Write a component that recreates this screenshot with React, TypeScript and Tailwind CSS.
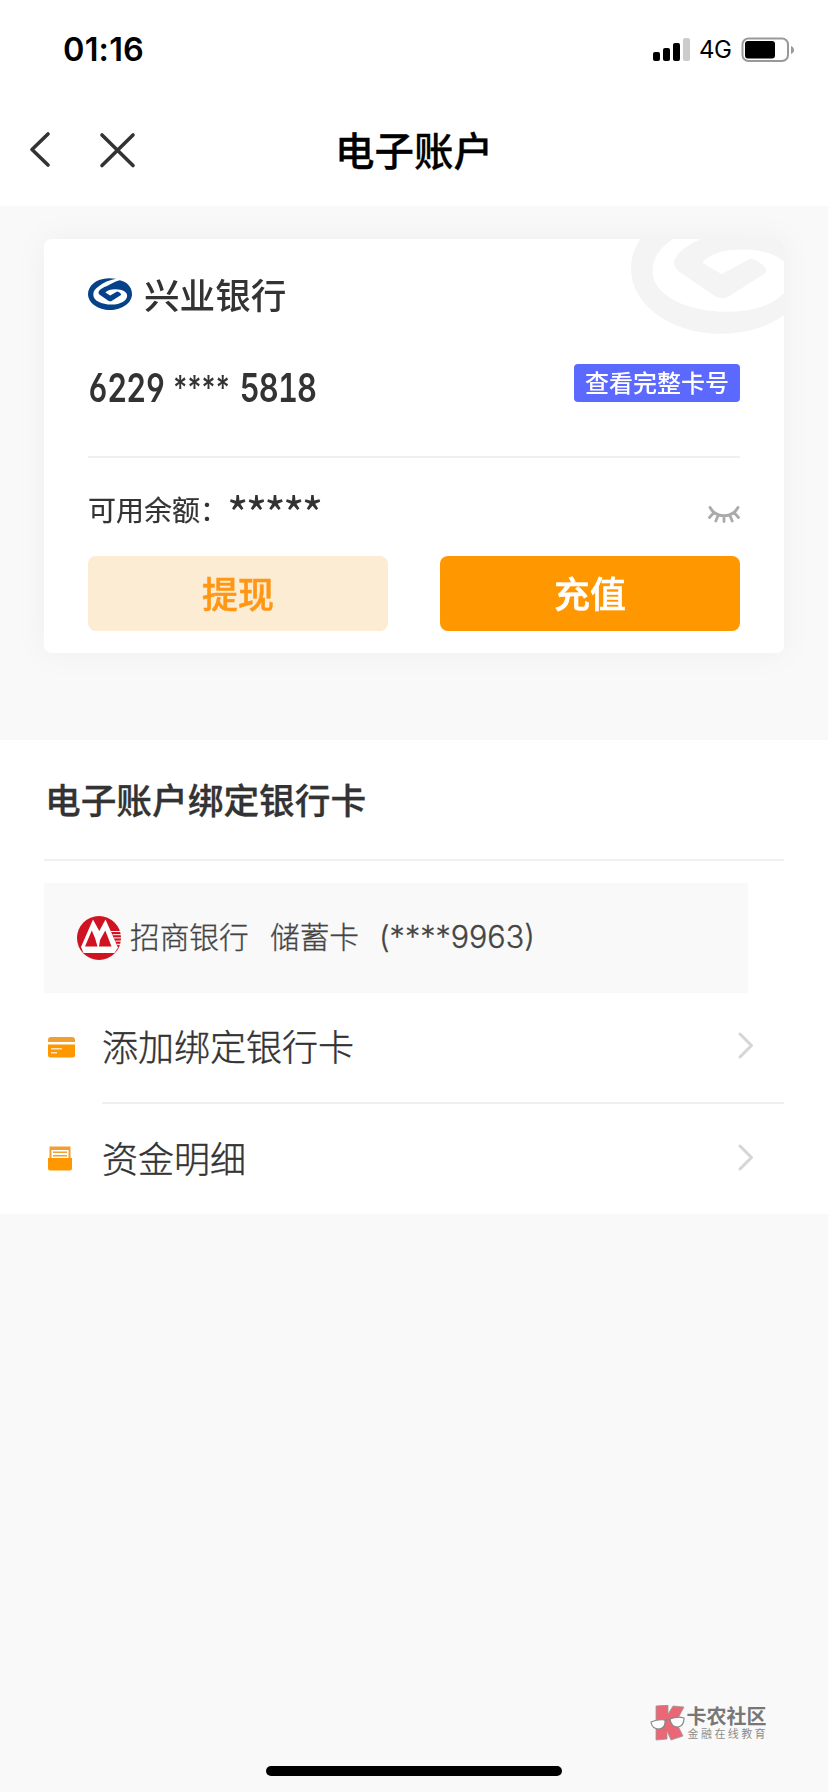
import { ReactNode } from 'react'

const menu = [
  { id: 'bind', label: '添加绑定银行卡', icon: <CardIcon /> },
  { id: 'detail', label: '资金明细', icon: <DetailIcon /> },
]

function StatusBar() {
  return (
    <div className="flex h-[100px] items-center justify-between pl-[63px] pr-[33px]">
      <span className="text-[32.5px] leading-none font-semibold tracking-[0.2px] text-black">01:16</span>
      <div className="flex items-center">
        <svg width="38" height="24" viewBox="0 0 38 24">
          <rect x="0" y="14" width="7" height="9" rx="2" />
          <rect x="10" y="10" width="7" height="13" rx="2" />
          <rect x="20" y="5" width="7" height="18" rx="2" />
          <rect x="30" y="0" width="7" height="23" rx="2" fill="#ccc" />
        </svg>
        <span className="ml-[8px] w-[42px] text-[24px] leading-[26px] tracking-[-0.5px] text-black">4G</span>
        <svg width="54" height="26" viewBox="0 0 54 26">
          <rect x="1.5" y="1.5" width="45.5" height="22.5" rx="6" fill="none" stroke="#999" strokeWidth="2" />
          <rect x="4" y="4" width="30" height="17.5" rx="3" />
          <path d="M50 9c4 1.5 4 6.5 0 8z" fill="#999" />
        </svg>
      </div>
    </div>
  )
}

function NavBar() {
  return (
    <div className="grid h-[106px] grid-cols-[1fr_auto_1fr] items-start">
      <div className="flex gap-[47px] pt-[31px] pl-[29px]">
        <svg width="22" height="38" viewBox="0 0 22 38" fill="none" stroke="#333" strokeWidth="3.6" strokeLinecap="round" strokeLinejoin="round">
          <path d="M19 3 3 18.5 19 34" />
        </svg>
        <svg width="38" height="38" viewBox="0 0 38 38" fill="none" stroke="#333" strokeWidth="3.6" strokeLinecap="round">
          <path d="M4 4 35 34.5M35 4 4 34.5" />
        </svg>
      </div>
      <h1 className="pt-[22px] text-[39.5px] leading-[60px] font-medium text-black [-webkit-text-stroke:0.3px]">电子账户</h1>
    </div>
  )
}

function SwirlLogo({ color, className }: { color: string; className: string }) {
  return (
    <svg className={className} viewBox="0 0 540 392" fill={color}>
      <path d="M345 10C120 -32 0 90 0 196C0 305 121 392 270 392S540 305 540 196C540 110 475 45 390 28C335 42 280 72 240 95C185 115 133 145 129 178C129 190 136 200 148 208L250 278Q272 292 294 279L396 215Q413 203 400 190Q385 174 358 166L272 213L213 178C240 152 275 139 340 139C420 140 480 172 480 218C480 280 400 326 288 326C165 326 65 275 65 205C65 165 85 135 125 108C190 55 260 25 345 10Z" />
    </svg>
  )
}

function MerchantsLogo() {
  return (
    <svg width="44" height="44" viewBox="0 0 44 44">
      <circle cx="22" cy="22" r="22" fill="#cf1322" />
      <path d="M16 3.5 4 31 6.5 37H37.5L41 31.5 28.5 3.5 22.3 15Z" fill="#fff" />
      <path d="M14.8 14.5 8 30.5H20.5L18 22ZM28.3 14.5 23 24 22 30.5H34.5Z" fill="#cf1322" />
      <path d="M34 15.5H43M35.5 18.7H44M37 21.9H44M38.5 25.1H44M40 28.3H43" stroke="#fff" strokeWidth="1" />
    </svg>
  )
}

function ClosedEye() {
  return (
    <svg width="32" height="18" viewBox="0 0 32 18" fill="none" stroke="#aaa" strokeWidth="2.8" strokeLinecap="round">
      <path d="M2 1.5C8 12.5 24 12.5 30 1.5M5.500 7 1.500 11.500M10 9.500 7.800 15M16 10.500V15.500M22 9.500 24.200 15M26.500 7 30.500 11.500" />
    </svg>
  )
}

function CardIcon() {
  return (
    <svg width="27" height="21" viewBox="0 0 27 21">
      <path d="M0 5V3Q0 0 3 0H24Q27 0 27 3V5Z" fill="#f0a030" />
      <path d="M0 7.5H27V18Q27 20.5 24.5 20.5H2.5Q0 20.5 0 18Z" fill="#ff9700" />
      <path d="M3 11.7H14M3 15.7H9" stroke="#ffe3b8" strokeWidth="1.4" />
    </svg>
  )
}

function DetailIcon() {
  return (
    <svg width="24" height="25" viewBox="0 0 24 25">
      <rect x="1.5" y="0.5" width="21" height="13" fill="#f0a030" />
      <path d="M3.5 4H20.5V12H3.5Z" fill="#fff" />
      <path d="M5 6.2H19M5 9.8H19" stroke="#f0a030" strokeWidth="1.5" />
      <path d="M0 12H24V22.5Q24 24.5 22 24.5H2Q0 24.5 0 22.5Z" fill="#ff9700" />
    </svg>
  )
}

function AccountCard() {
  return (
    <section className="relative mx-[44px] h-[414px] overflow-hidden rounded-lg bg-white px-[44px]">
      <SwirlLogo color="#f4f4f4" className="absolute top-[-36px] left-[587px] h-[131px] w-[180px]" />
      <div className="flex h-[83px] items-end gap-[12px]">
        <SwirlLogo color="#06428a" className="mb-[12px] h-[32px] w-[44px]" />
        <span className="text-[35.6px] leading-[50px] font-medium text-[#333]">兴业银行</span>
      </div>
      <div className="mt-[34px] flex h-[60px] justify-between">
        <div className="flex origin-left scale-x-[0.79] text-[39px] leading-[63px] font-semibold text-[#333] [font-feature-settings:'tnum','cv03','cv04','cv09']">
          <span className="w-[108px] tracking-[-1px]">6229</span>
          <span className="w-[84px] text-[34px] leading-[64px] font-medium tracking-[0.2px] [font-feature-settings:normal]">****</span>
          <span className="tracking-[-1px]">5818</span>
        </div>
        <button className="mt-[8px] h-[38px] w-[166px] rounded-[4px] bg-[#5b69ff] pt-px text-[24px] leading-[37px] font-medium text-white">
          查看完整卡号
        </button>
      </div>
      <div className="mt-[40px] h-[2px] bg-[#f0f0f0]" />
      <div className="flex h-[98px] items-start justify-between">
        <div className="flex text-[#333]">
          <span className="w-[139px] pt-[31px] text-[28px] leading-[44px] whitespace-nowrap [-webkit-text-stroke:0.2px]">可用余额：</span>
          <span className="pt-[26px] text-[46px] leading-[56px] tracking-[-2.8px] font-['Noto_Sans_CJK_SC']">*****</span>
        </div>
        <div className="pt-[48px]">
          <ClosedEye />
        </div>
      </div>
      <div className="flex justify-between text-[36px] leading-[75px] font-medium [-webkit-text-stroke:0.5px]">
        <button className="h-[75px] w-[300px] rounded-lg bg-[#fdecd4] pt-[2px] text-[#ff9714]">提现</button>
        <button className="h-[75px] w-[300px] rounded-lg bg-[#ff9700] pt-[2px] text-white">充值</button>
      </div>
    </section>
  )
}

function MenuRow({ icon, label, last }: { icon: ReactNode; label: string; last: boolean }) {
  return (
    <div className="flex h-[111px]">
      <div className="flex w-[58px] items-center pb-[3px] pl-[4px]">{icon}</div>
      <div className={`flex flex-1 items-center justify-between pr-[31px] ${last ? '' : 'border-b-2 border-[#f0f0f0]'}`}>
        <span className="text-[36px] leading-[50px] font-light text-[#333] [-webkit-text-stroke:0.4px]">{label}</span>
        <svg className="mb-[3px]" width="16" height="28" viewBox="0 0 16 28" fill="none" stroke="#d6d6d6" strokeWidth="3" strokeLinecap="round" strokeLinejoin="round">
          <path d="M3 2 14.5 13.5 3 25" />
        </svg>
      </div>
    </div>
  )
}

function CommunityMark() {
  return (
    <div className="flex items-start">
      <svg width="36" height="36" viewBox="0 0 36 36">
        <path d="M6 1 18 0V9L23 1 34 2 26 17 33 31 21 35 17 26V34L6 35Z" fill="#ea6875" stroke="#999" strokeWidth="0.8" />
        <path d="M1 17Q8 14 15 15Q16 23 9 24Q2 24 1 17ZM20 14Q27 11 34 13Q34 21 28 22Q21 22 20 14Z" fill="#fff" stroke="#888" strokeWidth="1.2" />
        <path d="M15 16Q17 13 20 15" fill="none" stroke="#888" strokeWidth="1.2" />
      </svg>
      <div className="ml-[1px] pt-[2px]">
        <div className="text-[20px] leading-[20px] font-bold text-[#777]">卡农社区</div>
        <div className="pt-px pl-px text-[11px] leading-[13px] tracking-[2.4px] text-[#8d8d8d]">金融在线教育</div>
      </div>
    </div>
  )
}

export default function App() {
  return (
    <main className="flex h-[1792px] w-[828px] flex-col overflow-hidden bg-[#f9f9f9] font-['Inter','Noto_Sans_CJK_SC',sans-serif]">
      <header className="h-[206px] shrink-0 bg-white">
        <StatusBar />
        <NavBar />
      </header>

      <div className="h-[534px] shrink-0 bg-[#f9f9f9] pt-[33px]">
        <div className="[filter:drop-shadow(0_0_14px_rgba(0,0,0,0.045))]">
          <AccountCard />
        </div>
      </div>

      <section className="h-[474px] shrink-0 bg-white px-[44px]">
        <h2 className="h-[119px] pl-px text-[35.7px] leading-[122px] font-medium text-[#333] [-webkit-text-stroke:0.3px]">电子账户绑定银行卡</h2>
        <div className="h-[2px] bg-[#f0f0f0]" />
        <div className="mt-[22px] flex h-[110px] w-[704px] items-center bg-[#f9f9f9] pl-[33px] font-['Noto_Sans_CJK_SC'] text-[29.7px] font-light text-[#444]">
          <MerchantsLogo />
          <div className="ml-[9px] flex items-center pb-[3px] [-webkit-text-stroke:0.3px]">
            <span className="w-[140px]">招商银行</span>
            <span className="w-[109px]">储蓄卡</span>
            <span className="font-['Inter'] text-[30.5px]">(****9963)</span>
          </div>
        </div>
        {menu.map((item, i) => (
          <MenuRow key={item.id} icon={item.icon} label={item.label} last={i === menu.length - 1} />
        ))}
      </section>

      <footer className="flex flex-1 flex-col justify-end">
        <div className="mb-[25px] flex justify-end pr-[60px]">
          <CommunityMark />
        </div>
        <div className="mx-auto mb-[16px] h-[10px] w-[296px] rounded-full bg-black" />
      </footer>
    </main>
  )
}
